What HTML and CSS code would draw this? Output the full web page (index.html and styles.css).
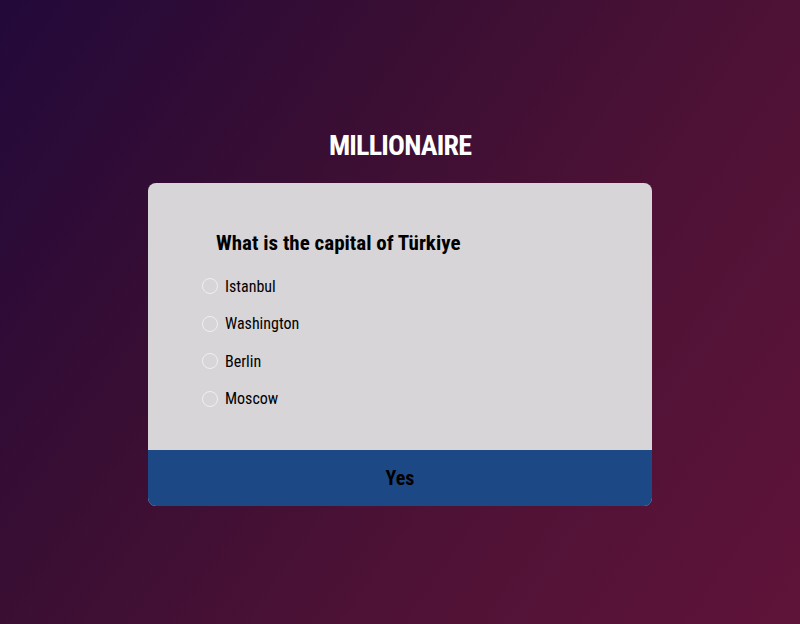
FILE: index.html
```html
<!DOCTYPE html>
<html lang="en">
<head>
    <meta charset="UTF-8">
    <meta name="viewport" content="width=device-width, initial-scale=1.0">
    <title>Millionaire</title>
    <link rel="stylesheet" href="styles.css">
</head>
<body>

    <h1 class="title">MILLIONAIRE</h1>

    <div class="quiz">
        <div class="quiz-header">
            <h2 class="question">What is the capital of Türkiye</h2>
            <ul class="answers">
                <li><input type="radio" name="answer" id="a"><label for="a">Istanbul</label></li>
                <li><input type="radio" name="answer" id="b"><label for="b">Washington</label></li>
                <li><input type="radio" name="answer" id="c"><label for="c">Berlin</label></li>
                <li><input type="radio" name="answer" id="d"><label for="d">Moscow</label></li>
            </ul>
        </div>
        <button class="submit">Yes</button>
    </div>

</body>
</html>
```

FILE: styles.css
```css
/* General styles */
body {
    font-family: Roboto, 'Open Sans', sans-serif;
    font-stretch: 75%;
    margin: 0;
    min-height: 624px;
    background: linear-gradient(125deg, #22093a 0%, #3a0e33 35%, #4e1236 65%, #5f1339 100%);
    display: flex;
    flex-direction: column;
    align-items: center;
}

.title {
    margin: 128px 0 0;
    height: 55px;
    font-size: 28px;
    line-height: 36px;
    font-weight: bold;
    color: #fff;
    letter-spacing: -0.8px;
}

/* Quiz card */
.quiz {
    width: 504px;
    background: #d7d5d8;
    border-radius: 8px;
    overflow: hidden;
}

.quiz-header {
    padding: 45px 54px 36px;
}

.question {
    margin: 0 0 13px 14px;
    font-size: 21px;
    line-height: 30px;
    font-weight: bold;
    color: #000;
}

.answers {
    list-style: none;
    margin: 0;
    padding: 0;
}

.answers li {
    display: flex;
    align-items: center;
    height: 30px;
    margin-bottom: 7.5px;
    font-size: 16px;
    color: #000;
}

.answers li:last-child {
    margin-bottom: 0;
}

.answers input {
    appearance: none;
    width: 16px;
    height: 16px;
    margin: 0 7px 0 0;
    border: 1px solid #f0eff1;
    border-radius: 50%;
    background: transparent;
}

/* Button */
.submit {
    display: block;
    width: 100%;
    height: 56px;
    border: none;
    background: #1d4886;
    color: #000;
    font-family: inherit;
    font-stretch: 75%;
    font-size: 20px;
    font-weight: bold;
    cursor: pointer;
}
```
